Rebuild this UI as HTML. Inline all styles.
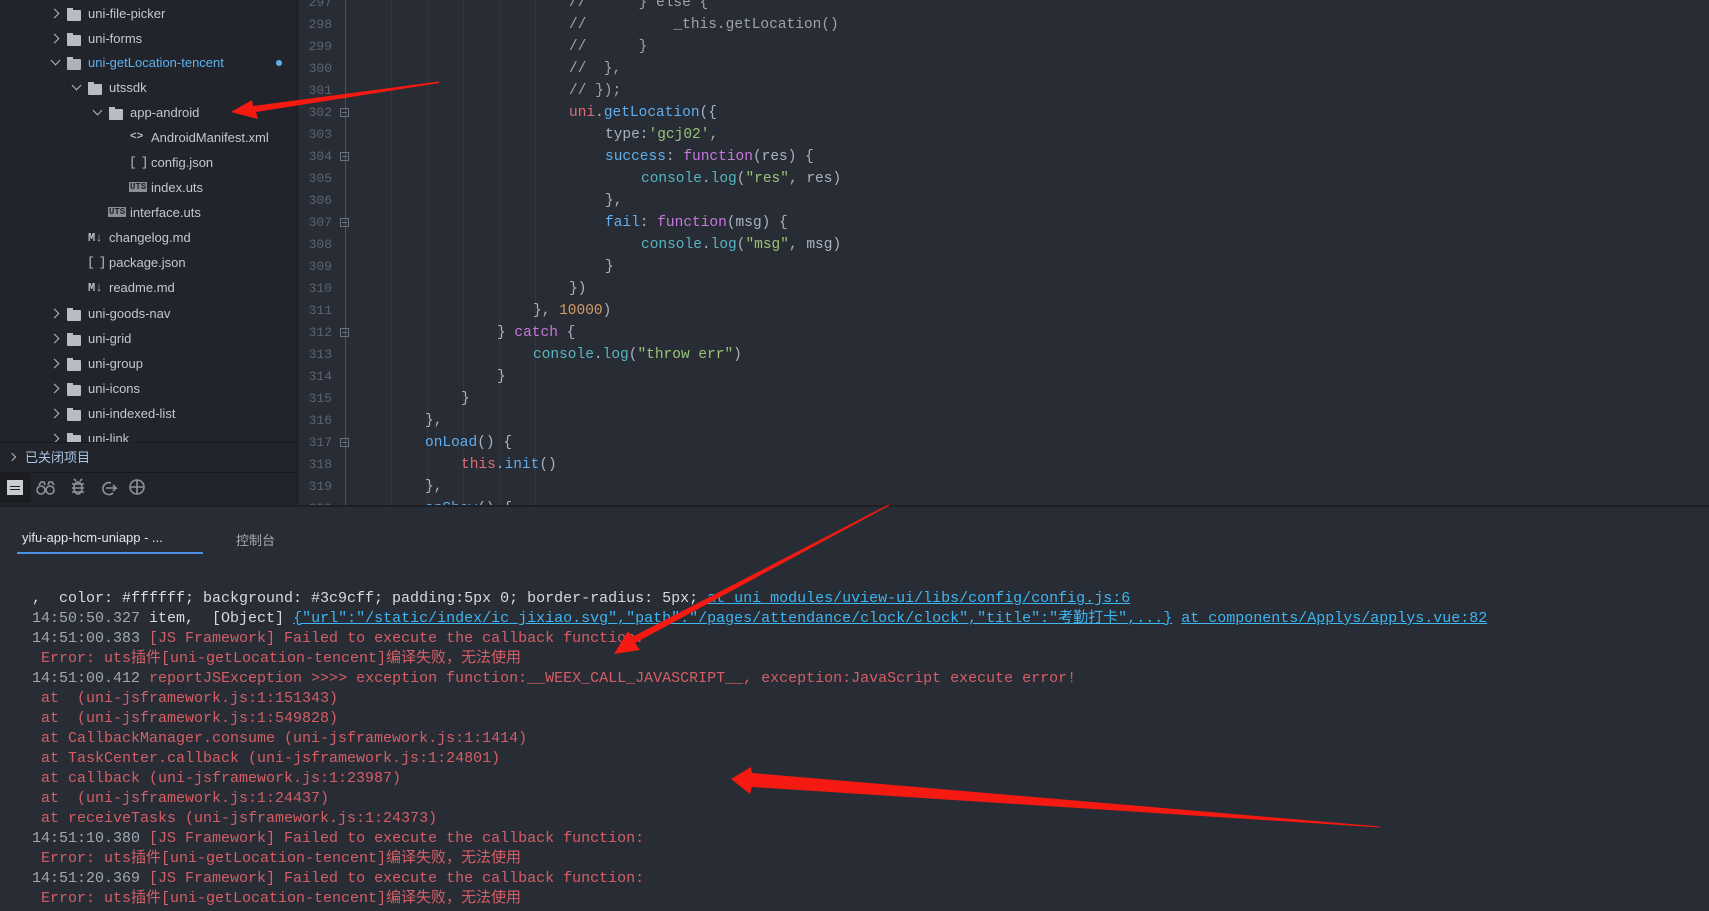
<!DOCTYPE html>
<html><head><meta charset="utf-8"><style>
*{margin:0;padding:0;box-sizing:border-box}
body{width:1709px;height:911px;overflow:hidden;background:#282c34;position:relative;font-family:"Liberation Sans","Noto Sans CJK SC",sans-serif}
.abs{position:absolute}
#side{left:0;top:0;width:298px;height:505px;background:#21252b;overflow:hidden}
.row{position:absolute;height:25px;line-height:25px;font-size:13px;color:#c3c7cf;white-space:nowrap}
.arr{position:absolute;width:7px;height:7px;border-right:1.5px solid #b5b9c0;border-bottom:1.5px solid #b5b9c0}
.fold{position:absolute;width:14px;height:11px;background:#b9bcc2;border-radius:1px}
.fold:before{content:"";position:absolute;left:0;top:-2px;width:6px;height:3px;background:#b9bcc2}
.ficon{position:absolute;font-size:11px;color:#b9bcc2;font-weight:bold;font-family:"Liberation Mono",monospace;white-space:pre}
#editor{left:298px;top:0;width:1411px;height:505px;background:#282c34;overflow:hidden}
.ln{position:absolute;left:0;width:34px;text-align:right;font:13px "Liberation Mono",monospace;color:#5c6370;height:22px;line-height:22px}
.cl{position:absolute;font:14.5px "Liberation Mono",monospace;color:#abb2bf;white-space:pre;height:22px;line-height:22px}
.fb{position:absolute;left:42px;width:9px;height:9px;border:1px solid #6b717d}
.fb:after{content:"";position:absolute;left:1px;top:3px;width:5px;height:1px;background:#6b717d}
.guide{position:absolute;top:0;width:0;border-left:1px dotted #3b4048;height:505px}
.r{color:#e06c75}.b{color:#61afef}.g{color:#98c379}.p{color:#c678dd}.c{color:#56b6c2}.o{color:#d19a66}.cm{color:#9da3ad}
#console .l{position:absolute;left:32px;font:15px "Liberation Mono","Noto Sans CJK SC",monospace;white-space:pre;height:20px;line-height:20px;color:#d55e66}
#console .ts{color:#a2a8b2}#console .w{color:#d7dae0}#console .lk{color:#3db6f2;text-decoration:underline}
</style></head><body>

<div id="side" class="abs">
  <div class="arr" style="left:51px;top:10px;transform:rotate(-45deg)"></div><div class="fold" style="left:67px;top:10px"></div><div class="row" style="left:88px;top:1px">uni-file-picker</div>
  <div class="arr" style="left:51px;top:35px;transform:rotate(-45deg)"></div><div class="fold" style="left:67px;top:35px"></div><div class="row" style="left:88px;top:26px">uni-forms</div>
  <div class="arr" style="left:52px;top:57px;transform:rotate(45deg)"></div><div class="fold" style="left:67px;top:59px;background:#aeb2b8"></div><div class="row" style="left:88px;top:50px;color:#5fb1ee">uni-getLocation-tencent</div>
  <div class="abs" style="left:276px;top:60px;width:6px;height:6px;border-radius:50%;background:#5fb1ee"></div>
  <div class="arr" style="left:73px;top:82px;transform:rotate(45deg)"></div><div class="fold" style="left:88px;top:84px"></div><div class="row" style="left:109px;top:75px">utssdk</div>
  <div class="arr" style="left:94px;top:107px;transform:rotate(45deg)"></div><div class="fold" style="left:109px;top:109px"></div><div class="row" style="left:130px;top:100px">app-android</div>
  <div class="ficon" style="left:130px;top:131px">&lt;&gt;</div><div class="row" style="left:151px;top:125px">AndroidManifest.xml</div>
  <div class="ficon" style="left:129px;top:155px;font-weight:normal;font-size:13px;letter-spacing:-2px">[ ]</div><div class="row" style="left:151px;top:150px">config.json</div>
  <div class="ficon" style="left:129px;top:182px;font-size:9px;background:#8a8e95;color:#21252b;padding:0 1px;line-height:10px">UTS</div><div class="row" style="left:151px;top:175px">index.uts</div>
  <div class="ficon" style="left:108px;top:207px;font-size:9px;background:#8a8e95;color:#21252b;padding:0 1px;line-height:10px">UTS</div><div class="row" style="left:130px;top:200px">interface.uts</div>
  <div class="ficon" style="left:88px;top:231px;font-size:12px">M↓</div><div class="row" style="left:109px;top:225px">changelog.md</div>
  <div class="ficon" style="left:87px;top:255px;font-weight:normal;font-size:13px;letter-spacing:-2px">[ ]</div><div class="row" style="left:109px;top:250px">package.json</div>
  <div class="ficon" style="left:88px;top:281px;font-size:12px">M↓</div><div class="row" style="left:109px;top:275px">readme.md</div>
  <div class="arr" style="left:51px;top:310px;transform:rotate(-45deg)"></div><div class="fold" style="left:67px;top:310px"></div><div class="row" style="left:88px;top:301px">uni-goods-nav</div>
  <div class="arr" style="left:51px;top:335px;transform:rotate(-45deg)"></div><div class="fold" style="left:67px;top:335px"></div><div class="row" style="left:88px;top:326px">uni-grid</div>
  <div class="arr" style="left:51px;top:360px;transform:rotate(-45deg)"></div><div class="fold" style="left:67px;top:360px"></div><div class="row" style="left:88px;top:351px">uni-group</div>
  <div class="arr" style="left:51px;top:385px;transform:rotate(-45deg)"></div><div class="fold" style="left:67px;top:385px"></div><div class="row" style="left:88px;top:376px">uni-icons</div>
  <div class="arr" style="left:51px;top:410px;transform:rotate(-45deg)"></div><div class="fold" style="left:67px;top:410px"></div><div class="row" style="left:88px;top:401px">uni-indexed-list</div>
  <div class="arr" style="left:51px;top:435px;transform:rotate(-45deg)"></div><div class="fold" style="left:67px;top:435px"></div><div class="row" style="left:88px;top:426px">uni-link</div>
  <div class="abs" style="left:0;top:442px;width:298px;height:63px;background:#21252b;border-top:1px solid #181a1f"></div>
  <div class="arr" style="left:9px;top:454px;width:6px;height:6px;transform:rotate(-45deg)"></div>
  <div class="row" style="left:25px;top:445px;color:#a9c3e0">已关闭项目</div>
  <div class="abs" style="left:0;top:472px;width:298px;height:1px;background:#181a1f"></div>
  <div class="abs" style="left:0;top:473px;width:31px;height:30px;background:#1b1d22"></div>
  <div class="abs" style="left:7px;top:480px;width:16px;height:15px;background:#c9ccd1"></div>
  <div class="abs" style="left:10px;top:486px;width:10px;height:1px;background:#1b1d22;box-shadow:0 3px 0 #1b1d22"></div>
  <svg class="abs" style="left:36px;top:478px" width="120" height="20" viewBox="0 0 120 20" fill="none" stroke="#8e939b" stroke-width="1.6">
    <circle cx="5" cy="12" r="4"/><circle cx="14" cy="12" r="4"/><path d="M3 7l2-3h3l1 3M12 7l1-3h3l2 3"/>
    <ellipse cx="42" cy="10" rx="4" ry="6"/><path d="M36 6h12M36 10h12M36 14h12M40 3l-2-2M44 3l2-2"/>
    <path d="M75 5a6 6 0 1 0 2 10M70 10h10l-3-3M80 10l-3 3"/>
    <circle cx="101" cy="9" r="7"/><path d="M95 9h12M101 2v14"/>
  </svg>
</div>
<div class="abs" style="left:297px;top:0;width:1px;height:505px;background:#1a1c21"></div>

<div id="editor" class="abs">
  <div class="abs" style="left:47px;top:0;width:1px;height:505px;background:#4b5160"></div>
  <div class="guide" style="left:93px"></div><div class="guide" style="left:129px"></div><div class="guide" style="left:165px"></div><div class="guide" style="left:201px"></div><div class="guide" style="left:237px"></div>
  <div class="ln" style="top:-8px">297</div>
  <div class="ln" style="top:14px">298</div>
  <div class="ln" style="top:36px">299</div>
  <div class="ln" style="top:58px">300</div>
  <div class="ln" style="top:80px">301</div>
  <div class="ln" style="top:102px">302</div><div class="fb" style="top:108px"></div>
  <div class="ln" style="top:124px">303</div>
  <div class="ln" style="top:146px">304</div><div class="fb" style="top:152px"></div>
  <div class="ln" style="top:168px">305</div>
  <div class="ln" style="top:190px">306</div>
  <div class="ln" style="top:212px">307</div><div class="fb" style="top:218px"></div>
  <div class="ln" style="top:234px">308</div>
  <div class="ln" style="top:256px">309</div>
  <div class="ln" style="top:278px">310</div>
  <div class="ln" style="top:300px">311</div>
  <div class="ln" style="top:322px">312</div><div class="fb" style="top:328px"></div>
  <div class="ln" style="top:344px">313</div>
  <div class="ln" style="top:366px">314</div>
  <div class="ln" style="top:388px">315</div>
  <div class="ln" style="top:410px">316</div>
  <div class="ln" style="top:432px">317</div><div class="fb" style="top:438px"></div>
  <div class="ln" style="top:454px">318</div>
  <div class="ln" style="top:476px">319</div>
  <div class="ln" style="top:498px">320</div>
  <div class="cl" style="left:271px;top:-8px"><span class="cm">//      } else {</span></div>
  <div class="cl" style="left:271px;top:14px"><span class="cm">//          _this.getLocation()</span></div>
  <div class="cl" style="left:271px;top:36px"><span class="cm">//      }</span></div>
  <div class="cl" style="left:271px;top:58px"><span class="cm">//  },</span></div>
  <div class="cl" style="left:271px;top:80px"><span class="cm">// });</span></div>
  <div class="cl" style="left:271px;top:102px"><span class="r">uni</span>.<span class="b">getLocation</span>({</div>
  <div class="cl" style="left:307px;top:124px">type:<span class="g">'gcj02'</span>,</div>
  <div class="cl" style="left:307px;top:146px"><span class="b">success</span>: <span class="p">function</span>(res) {</div>
  <div class="cl" style="left:343px;top:168px"><span class="c">console</span>.<span class="c">log</span>(<span class="g">"res"</span>, res)</div>
  <div class="cl" style="left:307px;top:190px">},</div>
  <div class="cl" style="left:307px;top:212px"><span class="b">fail</span>: <span class="p">function</span>(msg) {</div>
  <div class="cl" style="left:343px;top:234px"><span class="c">console</span>.<span class="c">log</span>(<span class="g">"msg"</span>, msg)</div>
  <div class="cl" style="left:307px;top:256px">}</div>
  <div class="cl" style="left:271px;top:278px">})</div>
  <div class="cl" style="left:235px;top:300px">}, <span class="o">10000</span>)</div>
  <div class="cl" style="left:199px;top:322px">} <span class="p">catch</span> {</div>
  <div class="cl" style="left:235px;top:344px"><span class="c">console</span>.<span class="c">log</span>(<span class="g">"throw err"</span>)</div>
  <div class="cl" style="left:199px;top:366px">}</div>
  <div class="cl" style="left:163px;top:388px">}</div>
  <div class="cl" style="left:127px;top:410px">},</div>
  <div class="cl" style="left:127px;top:432px"><span class="b">onLoad</span>() {</div>
  <div class="cl" style="left:163px;top:454px"><span class="r">this</span>.<span class="b">init</span>()</div>
  <div class="cl" style="left:127px;top:476px">},</div>
  <div class="cl" style="left:127px;top:498px"><span class="b">onShow</span>() {</div>
</div>
<div class="abs" style="left:0;top:505px;width:1709px;height:2px;background:#1d1f24"></div>

<div class="abs" style="left:22px;top:530px;font-size:13px;color:#e4e6ea">yifu-app-hcm-uniapp - ...</div>
<div class="abs" style="left:236px;top:530px;font-size:13px;color:#a3a7ae">控制台</div>
<div class="abs" style="left:17px;top:552px;width:186px;height:2px;background:#4d8fe0"></div>

<div id="console">
  <div class="l" style="top:589px;color:#d7dae0">,  color: #ffffff; background: #3c9cff; padding:5px 0; border-radius: 5px; <span class="lk">at uni_modules/uview-ui/libs/config/config.js:6</span></div>
  <div class="l" style="top:609px"><span class="ts">14:50:50.327</span><span class="w"> item,  [Object] </span><span class="lk">{"url":"/static/index/ic_jixiao.svg","path":"/pages/attendance/clock/clock","title":"考勤打卡",...}</span> <span class="lk">at components/Applys/applys.vue:82</span></div>
  <div class="l" style="top:629px"><span class="ts">14:51:00.383</span> [JS Framework] Failed to execute the callback function:</div>
  <div class="l" style="top:649px"> Error: uts插件[uni-getLocation-tencent]编译失败，无法使用</div>
  <div class="l" style="top:669px"><span class="ts">14:51:00.412</span> reportJSException &gt;&gt;&gt;&gt; exception function:__WEEX_CALL_JAVASCRIPT__, exception:JavaScript execute error!</div>
  <div class="l" style="top:689px"> at  (uni-jsframework.js:1:151343)</div>
  <div class="l" style="top:709px"> at  (uni-jsframework.js:1:549828)</div>
  <div class="l" style="top:729px"> at CallbackManager.consume (uni-jsframework.js:1:1414)</div>
  <div class="l" style="top:749px"> at TaskCenter.callback (uni-jsframework.js:1:24801)</div>
  <div class="l" style="top:769px"> at callback (uni-jsframework.js:1:23987)</div>
  <div class="l" style="top:789px"> at  (uni-jsframework.js:1:24437)</div>
  <div class="l" style="top:809px"> at receiveTasks (uni-jsframework.js:1:24373)</div>
  <div class="l" style="top:829px"><span class="ts">14:51:10.380</span> [JS Framework] Failed to execute the callback function:</div>
  <div class="l" style="top:849px"> Error: uts插件[uni-getLocation-tencent]编译失败，无法使用</div>
  <div class="l" style="top:869px"><span class="ts">14:51:20.369</span> [JS Framework] Failed to execute the callback function:</div>
  <div class="l" style="top:889px"> Error: uts插件[uni-getLocation-tencent]编译失败，无法使用</div>
</div>

<svg class="abs" style="left:0;top:0" width="1709" height="911" viewBox="0 0 1709 911">
  <g fill="#f41a12">
    <polygon points="439,81.5 439.5,83 256,112 258,119 231,112 252,100 253,106"/>
    <polygon points="888.5,504.5 889.5,505.5 635,643 640,650 614,654 628,631 632,637"/>
    <polygon points="1380,826.5 1380,827.5 752,787 750,794 731,779 751,767 752,773"/>
  </g>
</svg>
</body></html>
